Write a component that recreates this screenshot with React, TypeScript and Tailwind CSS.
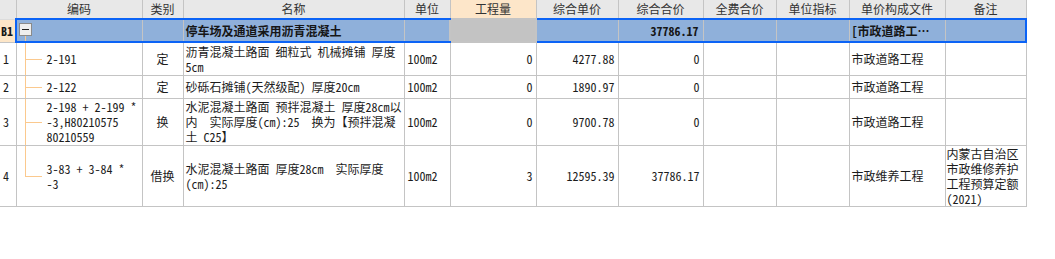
import { Fragment } from 'react'
import { clsx } from 'clsx'

const COLS = [16, 126, 41, 221, 46, 86, 82, 85, 73, 73, 96, 81]
const HEAD = ['', '编码', '类别', '名称', '单位', '工程量', '综合单价', '综合合价', '全费合价', '单位指标', '单价构成文件', '备注']

type Row = {
  no: string
  code: string[]
  kind: string
  name: string[]
  unit: string
  qty: string
  price: string
  total: string
  file: string
  note: string[]
  h: string
  last?: boolean
}

const ROWS: Row[] = [
  { no: '1', code: ['2-191'], kind: '定', name: ['沥青混凝土路面 细粒式 机械摊铺 厚度', '5cm'], unit: '100m2', qty: '0', price: '4277.88', total: '0', file: '市政道路工程', note: [], h: 'h-[33px]' },
  { no: '2', code: ['2-122'], kind: '定', name: ['砂砾石摊铺(天然级配) 厚度20cm'], unit: '100m2', qty: '0', price: '1890.97', total: '0', file: '市政道路工程', note: [], h: 'h-[23px]' },
  { no: '3', code: ['2-198 + 2-199 *', '-3,H80210575', '80210559'], kind: '换', name: ['水泥混凝土路面 预拌混凝土 厚度28cm以', '内  实际厚度(cm):25  换为【预拌混凝', '土 C25】'], unit: '100m2', qty: '0', price: '9700.78', total: '0', file: '市政道路工程', note: [], h: 'h-[47px]' },
  { no: '4', code: ['3-83 + 3-84 *', '-3'], kind: '借换', name: ['水泥混凝土路面 厚度28cm  实际厚度', '(cm):25'], unit: '100m2', qty: '3', price: '12595.39', total: '37786.17', file: '市政维养工程', note: ['内蒙古自治区', '市政维修养护', '工程预算定额', '(2021)'], h: 'h-[61px]', last: true },
]

function Lines({ lines }: { lines: string[] }) {
  return (
    <>
      {lines.map((l, i) => (
        <Fragment key={i}>
          {i > 0 && <br />}
          {l}
        </Fragment>
      ))}
    </>
  )
}

const cell = 'border border-[#c4c4c4] p-0 align-middle overflow-hidden whitespace-pre leading-[15px]'
const blue = 'border-y-2 border-y-[#0b63f6]'

export default function App() {
  return (
    <div className="w-[1055px] h-[259px] bg-white font-['Noto_Sans_Mono_CJK_SC','Noto_Sans_CJK_SC',monospace] text-[12px] text-[#1c1c1c]">
      <table className="table-fixed border-collapse w-[1026px]">
        <colgroup>
          {COLS.map((w, i) => <col key={i} style={{ width: w }} />)}
        </colgroup>
        <thead>
          <tr className="h-[19px]">
            {HEAD.map((t, i) => (
              <th key={i} className={clsx(
                'border-x border-[#c4c4c4] border-t-0 p-0 text-center font-normal text-[#333] leading-[18px]',
                i === 5 ? 'bg-[#fde6c9] font-bold text-[#222] border-b border-b-[#a9c6f0]' : 'bg-[#e8e8e8] border-b border-b-[#dcdcdc]',
                i === 0 && 'border-l-0'
              )}>
                {t}
              </th>
            ))}
          </tr>
        </thead>
        <tbody>
          <tr className="h-[23px] bg-[#8fb0da] font-bold text-[#161616]">
            <td className="border border-[#c4c4c4] bg-[#fde6c8] border-l-0 p-0 pl-[1px] text-[12px] align-middle">B1</td>
            <td className={clsx(cell, blue, 'border-l-2 border-l-[#0b63f6] relative')}>
              <span className="absolute left-[2px] top-[3px] w-[13px] h-[13px] border border-[#8a8a8a] bg-[#eeeeee] flex items-center justify-center">
                <span className="w-[7px] h-[1.5px] bg-[#222]" />
              </span>
              <span className="absolute left-[8px] top-[16px] bottom-0 w-px bg-[#fbc98e]" />
            </td>
            <td className={clsx(cell, blue)} />
            <td className={clsx(cell, blue, 'pl-[2px]')}>停车场及通道采用沥青混凝土</td>
            <td className={clsx(cell, blue)} />
            <td className={clsx(cell, 'border-2 border-[#0b63f6] bg-[#c3c3c3]')} />
            <td className={clsx(cell, blue)} />
            <td className={clsx(cell, blue, 'text-right pr-[4px]')}>37786.17</td>
            <td className={clsx(cell, blue)} />
            <td className={clsx(cell, blue)} />
            <td className={clsx(cell, blue, 'pl-[2px]')}>[市政道路工…</td>
            <td className={clsx(cell, blue, 'border-r-2 border-r-[#0b63f6]')} />
          </tr>
          {ROWS.map(r => (
            <tr key={r.no} className={r.h}>
              <td className={clsx(cell, 'border-l-0 pl-[3px]')}>{r.no}</td>
              <td className={clsx(cell, 'relative pl-[30px]')}>
                <span className={clsx('absolute left-[8px] top-0 w-px bg-[#fbc98e]', r.last ? 'h-1/2' : 'bottom-0')} />
                <span className="absolute left-[8px] top-1/2 w-[17px] h-px bg-[#fbc98e]" />
                <Lines lines={r.code} />
              </td>
              <td className={clsx(cell, 'text-center')}>{r.kind}</td>
              <td className={clsx(cell, 'pl-[2px]')}><Lines lines={r.name} /></td>
              <td className={clsx(cell, 'pl-[3px]')}>{r.unit}</td>
              <td className={clsx(cell, 'text-right pr-[3px]')}>{r.qty}</td>
              <td className={clsx(cell, 'text-right pr-[3px]')}>{r.price}</td>
              <td className={clsx(cell, 'text-right pr-[3px]')}>{r.total}</td>
              <td className={cell} />
              <td className={cell} />
              <td className={clsx(cell, 'pl-[2px]')}>{r.file}</td>
              <td className={clsx(cell, 'pl-[1px]')}><Lines lines={r.note} /></td>
            </tr>
          ))}
        </tbody>
      </table>
    </div>
  )
}
